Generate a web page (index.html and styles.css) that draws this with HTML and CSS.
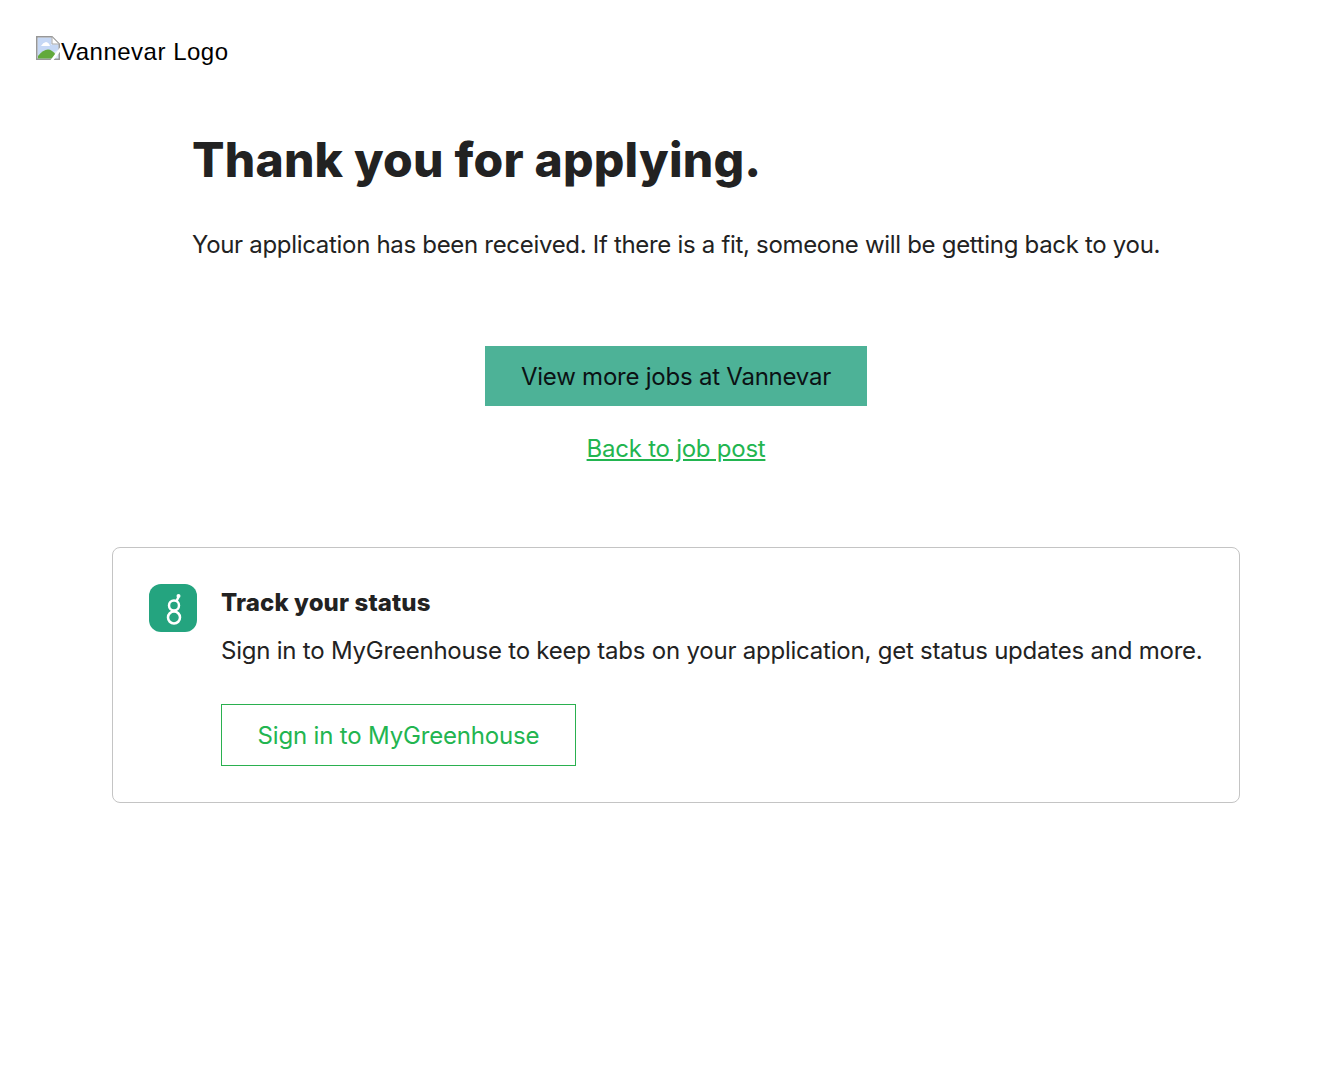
FILE: index.html
```html
<!DOCTYPE html>
<html lang="en">
<head>
<meta charset="utf-8">
<title>Thank you for applying</title>
<link rel="stylesheet" href="styles.css">
</head>
<body>
<header class="logo">
  <svg class="broken" width="24" height="24" viewBox="0 0 24 24" aria-hidden="true">
    <path d="M.75.750H16L23.250 8V23.250H.75Z" fill="#dfe8f8" stroke="#979797" stroke-width="1.500"/>
    <path d="M2 2H15V9H22V14L2 22Z" fill="#c6d8f5"/>
    <path d="M5 10Q7 6.500 10 6Q13 6.500 14 10Z" fill="#fff"/>
    <path d="M2 22.500V20Q7 13.500 12 13.500Q16 13.500 20 19L17 22.500Z" fill="#62a93c"/>
    <path d="M16 .75V8H23.250Z" fill="#fff" stroke="#a8a8a8"/>
    <path d="M15 25.500L26 11" stroke="#fff" stroke-width="2.500"/>
  </svg>
  <span class="logo-alt">Vannevar Logo</span>
</header>
<main class="main">
  <section class="thanks">
    <h1 class="title">Thank you for applying.</h1>
    <p class="lead">Your application has been received. If there is a fit, someone will be getting back to you.</p>
    <div class="actions">
      <a class="btn-primary" href="#">View more jobs at Vannevar</a>
      <a class="back" href="#">Back to job post</a>
    </div>
  </section>
  <section class="card">
    <div class="badge">
      <svg width="48" height="48" viewBox="0 0 48 48" aria-hidden="true">
        <g fill="none" stroke="#fff" stroke-width="2.500">
          <circle cx="25" cy="33.500" r="6"/>
          <circle cx="25" cy="21.500" r="5"/>
          <path d="M27.500 17L29.500 13"/>
        </g>
        <circle cx="29.500" cy="12" r="2" fill="#fff"/>
      </svg>
    </div>
    <div class="card-body">
      <h2 class="card-title">Track your status</h2>
      <p class="card-text">Sign in to MyGreenhouse to keep tabs on your application, get status updates and more.</p>
      <a class="btn-outline" href="#">Sign in to MyGreenhouse</a>
    </div>
  </section>
</main>
</body>
</html>
```
FILE: styles.css
```css
* { box-sizing: border-box; }
html, body { margin: 0; background: #fff; }
body { font-family: "Inter", "Liberation Sans", sans-serif; color: #222; min-height: 1073px; }
.logo { display: flex; align-items: flex-start; padding: 36px 36px 0; height: 100px; }
.broken { flex: none; }
.logo-alt { margin-left: 1px; font-family: "Liberation Sans", sans-serif; font-size: 24px; line-height: 32px; letter-spacing: .5px; color: #000; }
.main { width: 1128px; margin-left: 112px; }
.thanks { padding: 0 80px; }
.title { margin: 30px 0 0; font-size: 48px; line-height: 60px; font-weight: 800; letter-spacing: .22px; color: #222; }
.lead { margin: 39px 0 0; font-size: 24px; line-height: 32px; letter-spacing: -.31px; white-space: nowrap; }
.actions { display: flex; flex-direction: column; align-items: center; margin-top: 85px; }
.btn-primary { display: flex; align-items: center; justify-content: center; width: 382px; height: 60px; background: #4db297; color: #0b1214; font-size: 24px; letter-spacing: -.23px; text-decoration: none; }
.back { margin-top: 27px; font-size: 24px; line-height: 32px; letter-spacing: -.25px; color: #22b550; text-decoration: underline; }
.card { display: flex; gap: 24px; margin-top: 82px; padding: 36px; height: 256px; border: 1px solid #c4c4c4; border-radius: 8px; }
.badge { width: 48px; height: 48px; flex: none; background: #24a47f; border-radius: 12px; }
.card-body { flex: 1; min-width: 0; }
.card-title { margin: 3px 0 0; font-size: 24px; line-height: 32px; font-weight: 800; letter-spacing: .12px; }
.card-text { margin: 16px 0 0; font-size: 24px; line-height: 32px; letter-spacing: -.22px; white-space: nowrap; }
.btn-outline { display: flex; align-items: center; justify-content: center; width: 355px; height: 62px; margin-top: 37px; border: 1px solid #2ab04f; color: #22b550; font-size: 24px; letter-spacing: -.17px; text-decoration: none; }
```
